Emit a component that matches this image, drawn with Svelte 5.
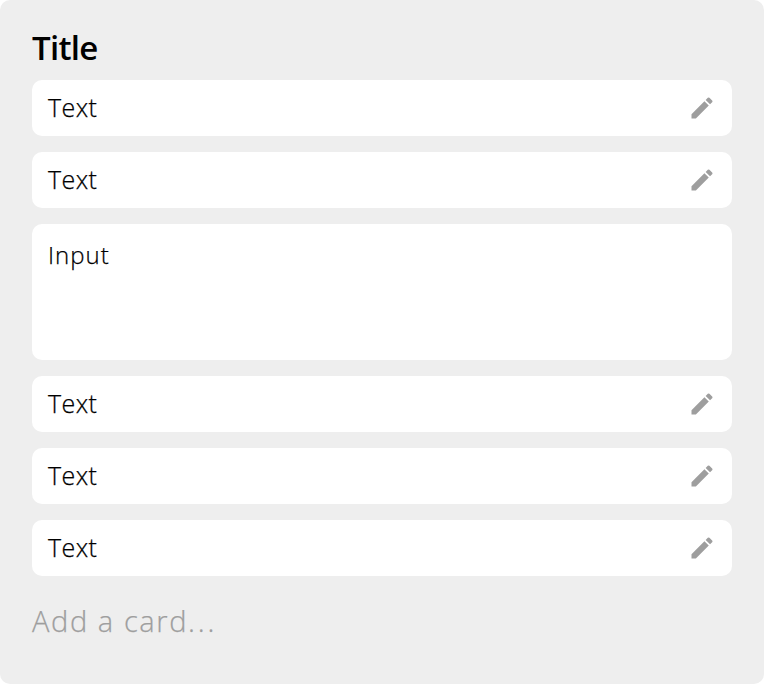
<script>
  const cards = [
    { text: 'Text' },
    { text: 'Text' },
    { text: 'Input', editing: true },
    { text: 'Text' },
    { text: 'Text' },
    { text: 'Text' }
  ];
</script>

<section class="list">
  <h2>Title</h2>
  <div class="cards">
    {#each cards as card}
      {#if card.editing}
        <div class="card editing"><span class="input">{card.text}</span></div>
      {:else}
        <div class="card">
          <span class="text">{card.text}</span>
          <svg width="28" height="28" viewBox="0 0 24 24" aria-hidden="true">
            <path d="M3 17.25V21h3.75L17.81 9.94l-3.75-3.75L3 17.25zM20.71 7.04a1 1 0 0 0 0-1.41l-2.34-2.34a1 1 0 0 0-1.41 0l-1.83 1.83 3.75 3.75 1.83-1.83z" />
          </svg>
        </div>
      {/if}
    {/each}
  </div>
  <div class="add">Add a card<span class="dots">...</span></div>
</section>

<style>
  .list {
    box-sizing: border-box;
    width: 764px;
    height: 684px;
    padding: 28px 32px;
    background: #eee;
    border-radius: 10px;
    font-family: 'Open Sans', 'Noto Sans', sans-serif;
    font-weight: 300;
    color: #000;
  }
  h2 {
    margin: 0 0 12px;
    height: 40px;
    line-height: 40px;
    font-size: 33px;
    font-weight: 600;
    letter-spacing: -0.7px;
  }
  .cards {
    display: flex;
    flex-direction: column;
    gap: 16px;
  }
  .card {
    box-sizing: border-box;
    display: flex;
    align-items: center;
    justify-content: space-between;
    height: 56px;
    padding: 0 16px;
    background: #fff;
    border-radius: 10px;
    font-size: 25px;
    line-height: 32px;
  }
  .editing {
    align-items: flex-start;
    height: 136px;
    padding-top: 15px;
  }
  .text,
  .input,
  .add {
    -webkit-text-stroke: 0.25px currentColor;
  }
  .text {
    padding-bottom: 2px;
    letter-spacing: 0.4px;
  }
  .input {
    font-size: 24px;
    letter-spacing: 1px;
  }
  svg {
    fill: #9e9e9e;
  }
  .add {
    margin-top: 25px;
    line-height: 40px;
    font-size: 29px;
    letter-spacing: 1.6px;
    color: #9e9e9e;
  }
  .dots {
    letter-spacing: 2.8px;
  }
</style>
